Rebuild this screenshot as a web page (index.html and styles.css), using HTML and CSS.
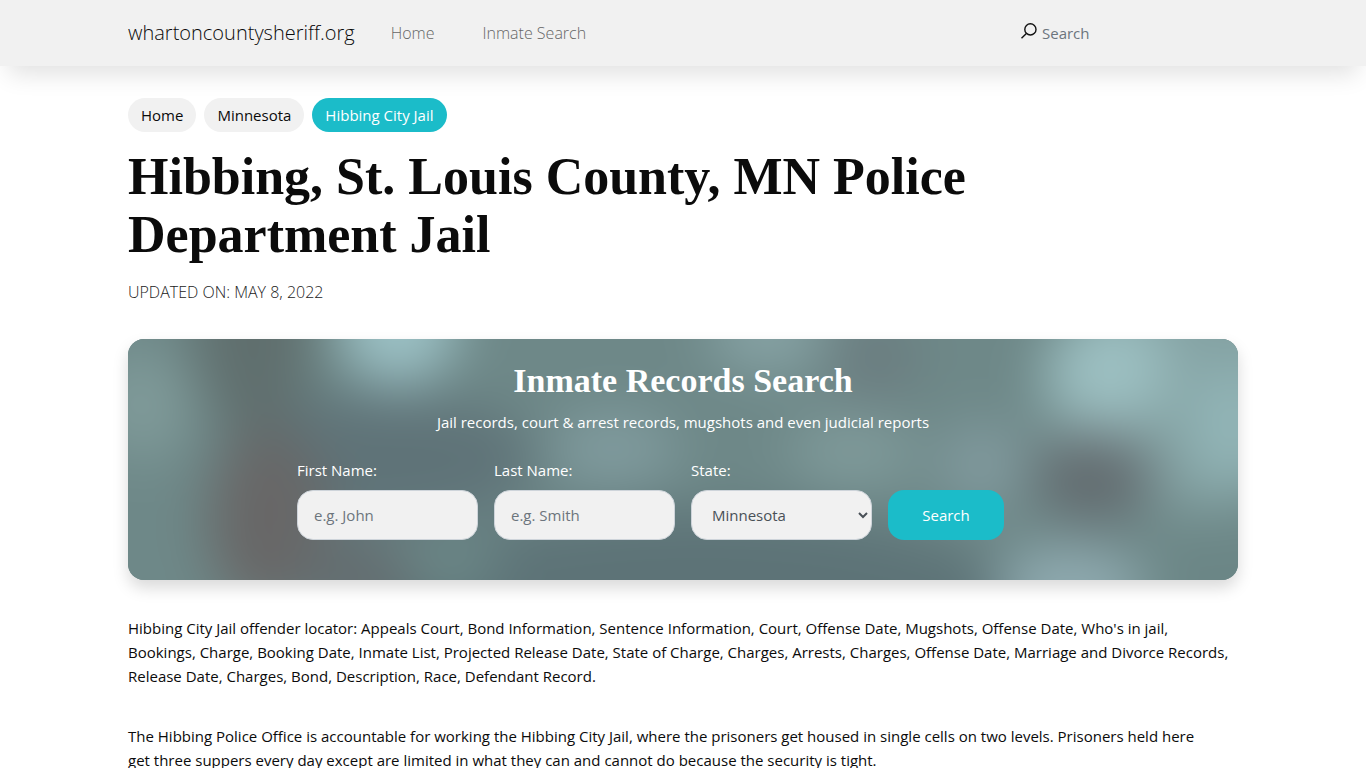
FILE: index.html
```
<!DOCTYPE html>
<html lang="en">

<head>
  <meta charset="UTF-8">
  <meta name="viewport" content="width=device-width, initial-scale=1.0">
  <title>Hibbing, St. Louis County, MN Police Department Jail</title>
  <link rel="stylesheet" href="styles.css">
</head>

<body>
  <header class="site-header">
    <div class="container header-inner">
      <a class="brand" href="#">whartoncountysheriff.org</a>
      <nav class="main-nav">
        <a href="#">Home</a>
        <a href="#">Inmate Search</a>
      </nav>
      <form class="header-search">
        <svg class="search-icon" viewBox="0 0 16 16" aria-hidden="true">
          <circle cx="9.4" cy="6.4" r="5.6" />
          <path d="M5.4 10.4L0.5 15.3" />
        </svg>
        <input type="search" placeholder="Search" aria-label="Search">
      </form>
    </div>
  </header>

  <main class="container">
    <nav class="breadcrumbs">
      <a href="#">Home</a>
      <a href="#">Minnesota</a>
      <a class="active" href="#">Hibbing City Jail</a>
    </nav>

    <h1>Hibbing, St. Louis County, MN Police Department Jail</h1>
    <p class="updated">UPDATED ON: MAY 8, 2022</p>

    <section class="records">
      <svg class="records-bg" viewBox="0 0 1110 240" preserveAspectRatio="none" aria-hidden="true">
        <defs>
          <filter id="soft" filterUnits="userSpaceOnUse" x="-150" y="-150" width="1410" height="540" color-interpolation-filters="sRGB">
            <feGaussianBlur stdDeviation="27" />
          </filter>
        </defs>
        <rect width="1110" height="240" fill="#6c8686" />
        <g filter="url(#soft)">
          <rect x="-150" y="-150" width="1410" height="540" fill="#6e8888" />
          <ellipse cx="570" cy="270" rx="330" ry="100" fill="#5d7377" />
          <ellipse cx="250" cy="120" rx="160" ry="65" fill="#5f7378" />
          <ellipse cx="125" cy="-5" rx="60" ry="100" fill="#606f6e" />
          <ellipse cx="140" cy="180" rx="60" ry="90" fill="#686767" />
          <ellipse cx="225" cy="240" rx="60" ry="45" fill="#636d70" />
          <ellipse cx="325" cy="225" rx="45" ry="35" fill="#6a8686" />
          <ellipse cx="15" cy="65" rx="50" ry="55" fill="#7f9a99" />
          <ellipse cx="270" cy="-15" rx="60" ry="62" fill="#9bc0c4" />
          <ellipse cx="485" cy="110" rx="65" ry="38" fill="#809b9e" />
          <ellipse cx="640" cy="-5" rx="60" ry="38" fill="#87a3a5" />
          <ellipse cx="745" cy="20" rx="45" ry="45" fill="#6b7d80" />
          <ellipse cx="725" cy="112" rx="65" ry="38" fill="#7f9a9a" />
          <ellipse cx="855" cy="125" rx="45" ry="42" fill="#819a9e" />
          <ellipse cx="1065" cy="55" rx="150" ry="115" fill="#84a2a3" />
          <ellipse cx="980" cy="30" rx="62" ry="58" fill="#9cbfc1" />
          <ellipse cx="1105" cy="85" rx="45" ry="60" fill="#92b5b7" />
          <ellipse cx="965" cy="138" rx="60" ry="44" fill="#636c70" />
          <ellipse cx="942" cy="250" rx="75" ry="45" fill="#8faab0" />
          <ellipse cx="1105" cy="245" rx="80" ry="50" fill="#6b8686" />
        </g>
      </svg>
      <h2>Inmate Records Search</h2>
      <p class="records-text">Jail records, court &amp; arrest records, mugshots and even judicial reports</p>
      <form class="records-form">
        <div class="field">
          <label for="firstName">First Name:</label>
          <input type="text" id="firstName" placeholder="e.g. John">
        </div>
        <div class="field">
          <label for="lastName">Last Name:</label>
          <input type="text" id="lastName" placeholder="e.g. Smith">
        </div>
        <div class="field">
          <label for="state">State:</label>
          <select id="state">
            <option>Minnesota</option>
          </select>
        </div>
        <div class="field">
          <button type="submit">Search</button>
        </div>
      </form>
    </section>

    <div class="content">
      <p>Hibbing City Jail offender locator: Appeals Court, Bond Information, Sentence Information, Court, Offense Date, Mugshots, Offense Date, Who's in jail, Bookings, Charge, Booking Date, Inmate List, Projected Release Date, State of Charge, Charges, Arrests, Charges, Offense Date, Marriage and Divorce Records, Release Date, Charges, Bond, Description, Race, Defendant Record.</p>
      <p>The Hibbing Police Office is accountable for working the Hibbing City Jail, where the prisoners get housed in single cells on two levels. Prisoners held here get&nbsp;three suppers every day except are limited in what they can and cannot do because the security is tight.</p>
    </div>
  </main>
</body>

</html>
```
FILE: styles.css
```
* {
  box-sizing: border-box;
}

body {
  margin: 0;
  font-family: "Open Sans", "Noto Sans", sans-serif;
  font-size: 15px;
  line-height: 24px;
  color: #0b0b0b;
  background: #fff;
}

a {
  color: inherit;
  text-decoration: none;
}

.container {
  max-width: 1140px;
  margin: 0 auto;
  padding: 0 15px;
}

/* Header */
.site-header {
  background: #f1f1f1;
  box-shadow: 0 16px 24px -8px rgba(0, 0, 0, 0.12);
}

.header-inner {
  display: flex;
  align-items: center;
  min-height: 66px;
}

.brand {
  font-size: 20px;
  font-weight: 300;
}

.main-nav {
  display: flex;
  gap: 48px;
  margin-left: 36px;
  font-size: 16px;
  font-weight: 300;
  color: #666;
}

.header-search {
  display: flex;
  align-items: center;
  gap: 5px;
  width: 217px;
  margin-left: auto;
}

.search-icon {
  flex: none;
  width: 16px;
  height: 16px;
  margin-bottom: 4px;
  fill: none;
  stroke: #111;
  stroke-width: 1.4;
}

.header-search input {
  flex: 1;
  min-width: 0;
  padding: 0;
  border: 0;
  background: transparent;
  font: inherit;
}

input::placeholder {
  color: #6c757d;
  opacity: 1;
}

/* Breadcrumbs */
.breadcrumbs {
  display: flex;
  flex-wrap: wrap;
  gap: 8px;
  padding-top: 32px;
}

.breadcrumbs a {
  padding: 5px 13px;
  border-radius: 17px;
  background: #f1f1f1;
}

.breadcrumbs .active {
  background: #1bbcc9;
  color: #fff;
}

h1,
h2 {
  font-family: "Liberation Serif", serif;
  font-weight: 700;
}

h1 {
  margin: 16px 0;
  font-size: 52px;
  line-height: 58px;
}

.updated {
  margin: 0 0 35px;
  font-size: 16px;
  font-weight: 300;
  color: #222;
}

/* Search panel */
.records {
  position: relative;
  z-index: 0;
  overflow: hidden;
  padding: 24px 24px 40px;
  border-radius: 16px;
  color: #fff;
  text-align: center;
  box-shadow: 0 8px 16px rgba(0, 0, 0, 0.15);
}

.records-bg {
  position: absolute;
  inset: 0;
  z-index: -1;
  width: 100%;
  height: 100%;
}

.records h2 {
  margin: 0 0 11px;
  font-size: 34px;
  line-height: 36px;
}

.records-text {
  margin: 0 0 24px;
}

.records-form {
  display: flex;
  flex-wrap: wrap;
  justify-content: center;
  align-items: flex-end;
  gap: 16px;
}

.field {
  width: 181px;
  text-align: left;
}

.field label {
  display: block;
  margin-bottom: 8px;
}

.field input,
.field select {
  display: block;
  width: 100%;
  height: 50px;
  padding: 0 16px;
  border: 1px solid #ced4da;
  border-radius: 16px;
  background: #f1f1f1;
  font: inherit;
  color: #495057;
}

.field select {
  padding: 0 0 0 16px;
}

.field button {
  display: block;
  width: 116px;
  height: 50px;
  border: 0;
  border-radius: 16px;
  background: #1bbcc9;
  font: inherit;
  color: #fff;
  cursor: pointer;
}

.content {
  padding-top: 36px;
}

.content p {
  margin: 0 0 36px;
}
```
